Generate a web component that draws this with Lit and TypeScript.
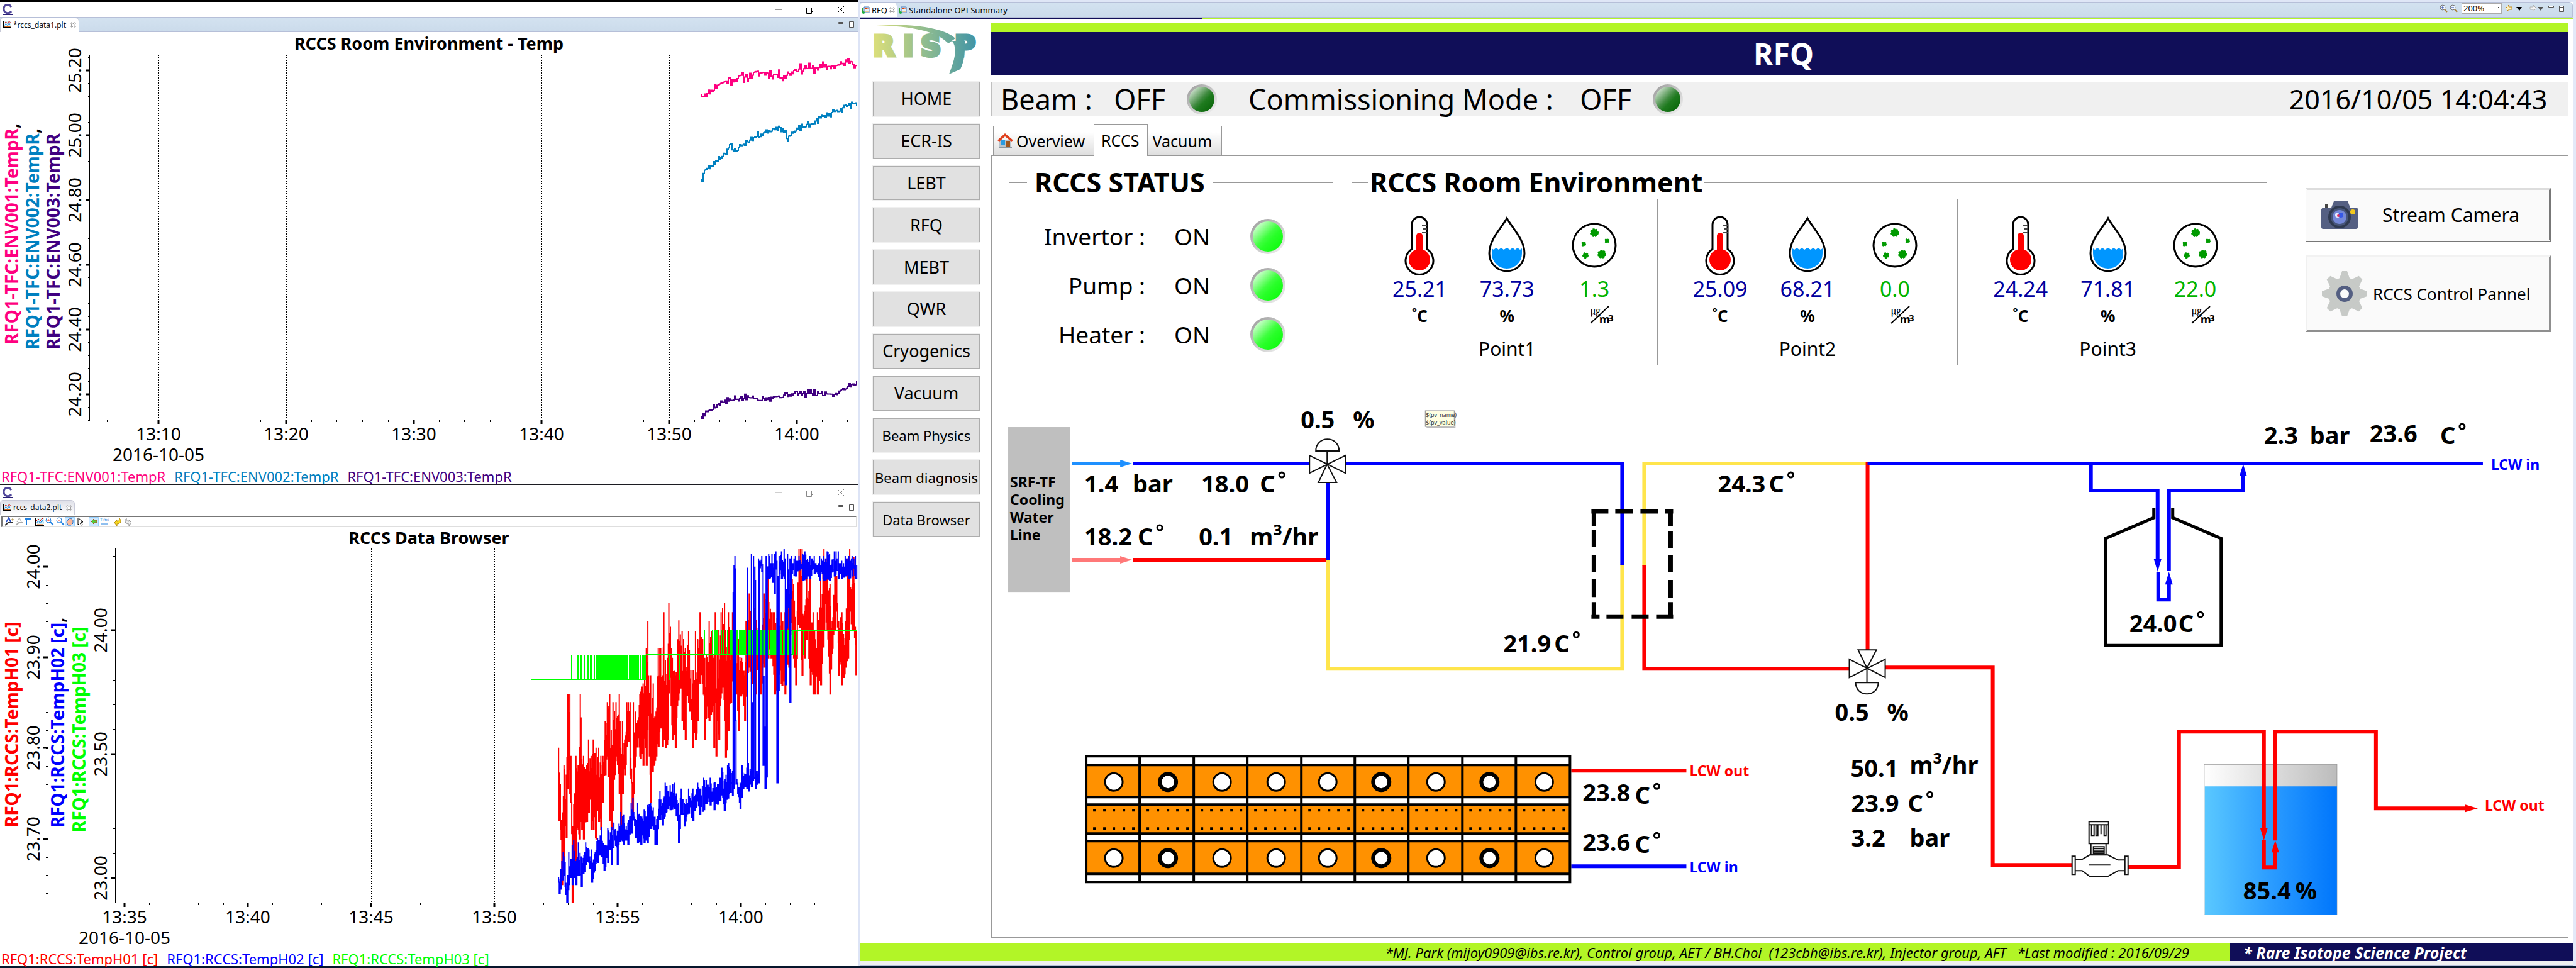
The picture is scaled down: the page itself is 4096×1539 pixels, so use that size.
import { LitElement, html, svg, css } from "lit";
import { customElement, property } from "lit/decorators.js";

type Pt = [number, number];

/** Small deterministic generator so that the traces look the same on every load. */
function rng(seed: number) {
  let s = seed;
  return () => {
    s = (s * 1664525 + 1013904223) % 4294967296;
    return s / 4294967296;
  };
}

/** Step trace that follows key points with quantised sensor noise. */
function noisyTrace(keys: Pt[], quantum: number, seed: number): string {
  const rand = rng(seed);
  let d = `M${keys[0][0]} ${keys[0][1]}`;
  let k = 0;
  for (let x = keys[0][0]; x <= keys[keys.length - 1][0]; x += 2) {
    while (k < keys.length - 2 && x > keys[k + 1][0]) k++;
    const [x0, y0] = keys[k];
    const [x1, y1] = keys[k + 1];
    const base = y0 + ((y1 - y0) * (x - x0)) / (x1 - x0);
    const r = rand();
    const kick = r > 0.95 ? -2 : r < 0.05 ? 2 : r > 0.72 ? -1 : r < 0.28 ? 1 : 0;
    const y = Math.round((base + kick * quantum) * 10) / 10;
    d += `H${x}V${y}`;
  }
  return d;
}

/** Dense trace that jumps between an upper and a lower envelope: x, top, bottom triples. */
function envelopeTrace(env: number[], quantum: number, step: number, seed: number): string {
  const rand = rng(seed);
  const px = (v: number) => Math.round((831.4 + v * 0.34443) * 10) / 10;
  const py = (v: number) => Math.round((859.9 + v * 0.37163) * 10) / 10;
  let d = `M${px(env[0])} ${py(env[1])}`;
  for (let i = 0; i < env.length; i += 3) {
    const [x, hi, lo] = env.slice(i, i + 3);
    d += `H${px(x)}V${py(hi)}V${py(lo)}`;
    if (i + 3 >= env.length) break;
    const nx = env[i + 3];
    for (let v = x + step; v < nx - step / 2; v += step) {
      const t = (v - x) / (nx - x);
      const top = hi + (env[i + 4] - hi) * t;
      const bot = lo + (env[i + 5] - lo) * t;
      const span = bot - top;
      const a = top + Math.round((rand() * 0.45 * span) / quantum) * quantum;
      const b = bot - Math.round((rand() * 0.45 * span) / quantum) * quantum;
      d += `H${px(v)}V${py(a)}V${py(b)}`;
    }
  }
  return d;
}

const ENV1: Pt[] = [[1116,150],[1124,149],[1137,137],[1153,129],[1182,123],[1213,115],[1236,119],[1248,121],[1265,110],[1296,108],[1331,104],[1350,97],[1362,101]];
const ENV2: Pt[] = [[1116,285],[1119,271],[1130,264],[1144,250],[1162,231],[1165,242],[1173,235],[1198,219],[1225,206],[1240,200],[1251,219],[1267,206],[1284,200],[1308,185],[1331,175],[1358,164],[1362,169]];
const ENV3: Pt[] = [[1116,662],[1130,649],[1144,641],[1170,635],[1189,632],[1208,634],[1236,630],[1260,626],[1308,626],[1326,627],[1343,616],[1362,608]];

const H01 = [165,885,1195,173,1040,1235,180,1270,1470,190,960,1350,200,1000,1270,208,655,960,217,655,1080,222,920,1120,228,1235,1545,238,1080,1350,245,920,1465,255,960,1235,263,880,1275,265,655,1200,280,920,1275,295,960,1200,303,850,1160,315,920,1235,325,850,1235,338,885,1275,350,885,1200,360,920,1235,370,920,1120,380,770,1000,390,690,920,401,655,1195,408,810,1235,416,690,1155,430,690,920,445,655,1080,452,885,1215,460,770,1080,470,850,1000,480,690,880,495,690,1000,505,1040,1160,510,690,1080,520,730,920,540,655,920,555,610,960,570,460,960,577,345,650,584,650,920,590,575,1120,602,610,960,615,730,920,625,460,880,636,460,800,645,575,880,651,305,850,660,570,885,668,500,850,674,265,650,690,500,850,704,575,885,720,340,650,735,385,770,750,460,850,765,385,690,783,610,885,797,385,850,807,420,770,818,305,610,830,420,610,840,500,850,860,345,770,870,385,730,882,500,885,888,305,690,892,460,920,905,380,850,915,305,650,931,265,770,936,380,925,949,305,810,960,385,690,968,305,570,985,460,655,995,420,810,1010,500,655,1024,575,770,1030,345,655,1045,225,540,1060,385,610,1073,265,655,1085,385,540,1098,385,655,1115,225,540,1132,150,500,1148,305,500,1163,305,655,1180,345,570,1193,305,610,1210,305,655,1228,185,540,1240,150,345,1250,185,500,1260,385,615,1275,35,300,1289,35,575,1300,300,500,1310,120,420,1327,150,615,1340,305,655,1360,305,655,1375,110,615,1390,35,385,1405,75,385,1418,185,655,1428,345,460,1440,150,385,1449,150,300,1458,345,575,1473,305,615,1490,345,540,1500,75,500,1509,35,300,1520,185,385,1528,70,385,1538,385,575];

const H02 = [165,1440,1460,168,1470,1510,180,1370,1450,186,1330,1430,195,1375,1480,203,1490,1545,212,1330,1470,222,1360,1440,228,1300,1470,235,1280,1440,245,1370,1470,256,1290,1430,270,1350,1480,290,1290,1385,305,1320,1375,318,1320,1460,330,1340,1410,345,1270,1375,363,1225,1350,375,1310,1410,392,1230,1375,410,1225,1385,420,1205,1280,436,1240,1385,452,1160,1280,465,1170,1300,485,1205,1300,500,1120,1250,508,1100,1170,520,1190,1270,530,1120,1290,545,1190,1300,560,1150,1290,575,1130,1290,590,1120,1230,602,1140,1230,610,1180,1300,618,1190,1300,633,1070,1190,645,1120,1215,657,1035,1160,680,1045,1150,700,1035,1145,719,1120,1290,731,1060,1170,745,1120,1220,765,1060,1165,785,1060,1195,807,1035,1110,817,1060,1170,835,1013,1150,865,1013,1130,883,1035,1150,910,1013,1110,919,970,1080,930,1025,1155,945,960,1100,950,950,1080,968,985,1090,971,220,1060,975,105,220,979,65,120,982,770,770,984,960,1040,992,1035,1080,1003,1035,1145,1012,960,1060,1034,970,1060,1037,115,1050,1041,950,1070,1052,985,1040,1055,55,1050,1061,690,1025,1065,65,1015,1071,110,170,1074,985,1060,1085,985,1035,1088,75,1035,1092,85,115,1103,65,130,1109,100,960,1118,795,1060,1123,65,1010,1128,110,160,1135,55,160,1150,55,150,1161,55,225,1168,45,120,1173,85,1035,1178,150,640,1183,65,140,1194,45,160,1206,35,160,1212,75,615,1222,55,160,1233,75,690,1240,65,140,1258,65,150,1275,65,125,1292,55,170,1302,45,160,1325,65,160,1345,65,140,1370,65,170,1389,65,170,1405,45,160,1416,55,170,1438,45,150,1456,45,160,1472,85,160,1488,65,150,1505,65,160,1520,65,150,1535,65,160,1541,105,160];

/** Intervals during which TempH03 toggles between two readings. */
const H03_LOW = [[223,229],[250,255],[262,273],[281,287],[299,305],[309,320],[326,332],[338,406],[409,428],[431,448],[450,485],[489,508],[510,516],[518,535],[541,547],[551,569],[675,680],[718,723]];
const H03_HIGH = [[836,840],[873,879],[885,891],[893,899],[914,920],[922,928],[941,946],[955,970],[972,996],[999,1007],[1010,1016],[1018,1030],[1033,1069],[1071,1137],[1141,1163],[1165,1180],[1182,1197],[1200,1228],[1244,1250],[1259,1265],[1294,1300]];

const h03Path = () => {
  const px = (v: number) => Math.round(831.4 + v * 0.34443);
  const bars = (list: number[][], y: number, h: number) =>
    list.map(([a, b]) => `M${px(a)} ${y}H${Math.max(px(b), px(a) + 2)}v${h}H${px(a)}z`).join("");
  return bars(H03_LOW, 1041, 40) + bars(H03_HIGH, 1001, 40);
};

const range = (n: number) => Array.from({ length: n }, (_, i) => i);

const windowIcons = html`<span class="wbtns">
  <svg viewBox="0 0 112 14" width="112" height="14" fill="none" stroke="currentColor">
    <path d="M1 7.5h11" opacity=".4" />
    <path d="M50.500 4.500h8v9h-8zM52.500 4V1.500h8v9h-2" />
    <path d="M100 2l10 10M110 2l-10 10" />
  </svg>
</span>`;

const paneIcons = html`<svg class="pane" viewBox="0 0 26 12" width="26" height="12" fill="#fff" stroke="#555">
  <path d="M.5 2.500h7v2h-7zM17.500 1.500h7v9h-7zM17.500 3.500h7" />
</svg>`;

const plotIcon = svg`<path d="M1 0v13M0 12h14" stroke="#000" stroke-width="2" fill="none"/><path d="M3 1h11v9H3z" fill="#d6f6fa"/><path d="M2 5l3-3 3 3 3-4 3 3" stroke="#e00000" fill="none"/><path d="M2 9l3-4 3 4 3-5 2 4" stroke="#1c7ce0" fill="none"/><path d="M3 11h10" stroke="#f06000"/>`;
const opiIcon = svg`<path d="M3 1h8v9H3z" fill="#e8f1fb" stroke="#4a7ab8"/><path d="M4 5l2-2 2 2 2-3" stroke="#e04000" fill="none"/><path d="M4 8h6" stroke="#f0a030"/><path d="M0 2v8" stroke="#30a030" stroke-width="2"/><circle cx="2" cy="10" r="2" fill="#20b040"/>`;
const closeX = html`<svg width="9" height="9" viewBox="0 0 9 9"><path d="M1 1h2l1.500 2L6 1h2v2L6 4.500 8 6v2H6L4.500 6 3 8H1V6l2-1.500L1 3z" fill="#fff" stroke="#777" stroke-width=".8" /></svg>`;

@customElement("plot-window")
export class PlotWindow extends LitElement {
  @property() file = "";
  @property() heading = "";
  @property({ type: Boolean }) active = false;
  @property({ attribute: false }) legend: { name: string; color: string }[] = [];

  static styles = css`
    :host { display: flex; flex-direction: column; background: #fff; font-family: "Noto Sans", sans-serif; color: #000; min-width: 0; }
    .titlebar { display: flex; align-items: center; justify-content: space-between; height: 24px; padding: 0 20px 0 3px; color: #888; }
    :host([active]) .titlebar { color: #000; }
    .wbtns { display: flex; }
    .tabs { display: flex; justify-content: space-between; align-items: center; height: 23px; border-bottom: 1px solid transparent; padding-right: 5px; }
    :host([active]) .tabs { background: linear-gradient(#d3e2f0, #cbdbeb); border-bottom-color: #b6bfd8; border-top: 1px solid #b6bfd8; height: 22px; }
    .tab { display: flex; align-items: center; gap: 3px; height: 23px; padding: 0 4px; box-sizing: border-box; border: 1px solid #c8cad8; border-bottom: 0; border-radius: 5px 6px 0 0; background: linear-gradient(#dfe0e8, #fff); font: 12px/20px "Noto Sans", sans-serif; color: #111; }
    :host([active]) .tab { background: #fff; }
    .tab span { padding-right: 4px; }
    .title { margin: 0; text-align: center; font-size: 27px; line-height: 34px; font-weight: 700; }
    :host([active]) .title { line-height: 35px; }
    .legend { display: flex; gap: 14px; padding-left: 2px; font-size: 22px; line-height: 23px; white-space: nowrap; }
    .grow { flex: 1; }
  `;

  render() {
    return html`
      <div class="titlebar">
        <svg width="19" height="19" viewBox="0 0 19 19" fill="none"><path d="M15 5C11-1 3 1 3 8s8 9 12 4" stroke="#51479a" stroke-width="3" /><path d="M1 17h16" stroke="#2c2278" stroke-width="2" /></svg>
        ${windowIcons}
      </div>
      <div class="tabs">
        <div class="tab"><svg width="13" height="13" viewBox="0 0 15 15">${plotIcon}</svg><span>${this.file}</span>${closeX}</div>
        ${paneIcons}
      </div>
      <slot name="tools"></slot>
      <h2 class="title">${this.heading}</h2>
      <slot></slot>
      <div class="grow"></div>
      <div class="legend">${this.legend.map((l) => html`<span style="color:${l.color}">${l.name}</span>`)}</div>
    `;
  }
}

@customElement("status-led")
export class StatusLed extends LitElement {
  @property({ type: Boolean }) on = false;
  static styles = css`
    :host { display: block; width: 48px; height: 48px; border-radius: 50%; background: linear-gradient(135deg, #989898, #f6f6f6); padding: 4px; box-sizing: border-box; }
    :host([on]) { width: 56px; height: 56px; }
    .lens { width: 100%; height: 100%; border-radius: 50%; background: linear-gradient(135deg, #eaf2ea 4%, #3f8a3f 48%, #1e7a1e 60%, #046004); }
    :host([on]) .lens { background: linear-gradient(135deg, #f4fff4 4%, #3fff3f 48%, #28ff28 60%, #05fb05); }
  `;
  render() {
    return html`<div class="lens"></div>`;
  }
}

@customElement("app-root")
export class AppRoot extends LitElement {
  static styles = css`
    :host { display: block; font-family: "Noto Sans", sans-serif; color: #000; background: #fff; }
    .desktop { display: grid; grid-template-columns: minmax(0, 1367fr) minmax(0, 2729fr); min-height: 100vh; box-sizing: border-box; border-bottom: 3px solid #06162c; }
    .left { display: flex; flex-direction: column; border-right: 3px solid #dde4f6; }
    .left plot-window { flex: none; border-top: 3px solid #000; }
    .left plot-window + plot-window { flex: 1 0 auto; border-top: 2px solid #1c1c22; }
    svg { display: block; }
    .plot { width: 100%; overflow: visible; }
    .plot text { font-family: "Noto Sans", sans-serif; font-size: 28px; text-anchor: middle; }
    .plot .ytitle { font-weight: 700; }
    .axis { stroke: #000; fill: none; }
    .major { stroke: #000; stroke-width: 3; fill: none; }
    .grid { stroke: #000; stroke-dasharray: 2 2; fill: none; }
    .tools { display: flex; align-items: center; gap: 4px; margin: 1px 2px 0; height: 18px; box-sizing: border-box; border: 1px solid #dedede; border-top: 2px solid #777; border-left: 2px solid #777; padding-left: 2px; }

    .right { display: flex; flex-direction: column; background: #fff; border-right: 5px solid #e3e9f8; border-top: 3px solid #dfe6f6; }
    .views { display: flex; justify-content: space-between; height: 25px; box-sizing: border-box; background: linear-gradient(#d3e2f0, #cbdbeb); border: 1px solid #b6bfd8; border-radius: 0 6px 0 0; }
    .viewtabs { display: flex; align-items: center; font-size: 13px; line-height: 20px; }
    .vt { display: flex; align-items: center; gap: 3px; padding: 0 3px; height: 23px; }
    .vt.on { background: #fff; border-right: 1px solid #b6bfd8; border-radius: 5px 6px 0 0; gap: 3px; }
    .viewtools { display: flex; align-items: flex-start; gap: 5px; padding: 1px 9px 0 0; }
    .zoomsel { position: relative; display: block; }
    .zoomsel select { appearance: none; display: block; width: 64px; height: 17px; border: 1px solid #aaa; border-radius: 0; background: #fff; margin: 0; padding: 0 0 0 2px; font: 13px/15px "Noto Sans", sans-serif; color: #000; }
    .zoomsel svg { position: absolute; right: 4px; top: 5px; pointer-events: none; }
    .strip { display: grid; grid-template-columns: 1fr 4fr; height: 3px; }
    .strip i:first-child { background: #100e58; }
    .strip i:last-child { background: #b2f527; }
    .body { display: grid; grid-template-columns: 170px minmax(0, 1fr); column-gap: 18px; padding: 6px 7px 9px 21px; flex: 1; }
    .side { display: flex; flex-direction: column; }
    .side nav { display: grid; grid-auto-rows: 1fr; gap: 12px; height: 723px; margin-top: 11px; }
    .side button { font: 27px/36px "Noto Sans", sans-serif; padding: 0; white-space: nowrap; color: #000; background: #e1e1e1; border: 1px solid #adadad; box-shadow: 0 0 0 1px #f0f0f0; }
    .side button.small { font-size: 22px; }
    .main { display: flex; flex-direction: column; min-width: 0; }
    .band { background: #100e58; border-top: 14px solid #b2f527; color: #fff; text-align: center; margin: 0; padding-left: 12px; font-size: 48px; line-height: 69px; font-weight: 700; }
    .status { display: grid; grid-template-columns: 383px 741px 1fr 471px; margin-top: 10px; height: 55px; box-sizing: border-box; border: 1px solid #c0c0c0; background: #f0f0f0; font-size: 45px; line-height: 53px; white-space: nowrap; }
    .status > div { display: flex; align-items: center; border-left: 1px solid #c0c0c0; box-sizing: border-box; }
    .status > div:first-child { border-left: 0; padding-left: 14px; }
    .status > div:nth-child(2) { padding-left: 24px; }
    .status > div:last-child { justify-content: center; font-size: 43px; padding-right: 6px; }
    .status .val { margin: 0 34px 0 auto; }
    .status status-led { margin-right: 25px; }
    .pagetabs { display: flex; align-items: flex-end; margin: 12px 0 0 3px; height: 50px; }
    .pagetabs button { display: flex; align-items: center; gap: 5px; height: 47px; margin: 0; border: 1px solid #999; border-bottom: 0; background: linear-gradient(#fff 20%, #dedede); font: 25px/36px "Noto Sans", sans-serif; color: #000; padding: 0 14px 0 6px; }
    .pagetabs button.on { height: 51px; background: #fff; padding: 0 13px 0 11px; position: relative; margin-bottom: -1px; border-left: 0; }
    .pagetabs button:last-child { border-left: 0; padding: 0 15px 0 7px; }
    .panel { border: 1px solid #999; flex: 1; display: flex; flex-direction: column; }
    .top { display: grid; grid-template-columns: 516fr 29px 1456fr 61px 390fr; padding: 17px 27px 0; }
    fieldset { margin: 0; padding: 0; min-width: 0; border: 1px solid #999; height: 341px; box-sizing: border-box; }
    .st legend { margin-left: 28px; padding: 0 12px; }
    .env legend { margin-left: 26px; padding: 0 2px; }
    legend { font-size: 43px; line-height: 50px; font-weight: 700; white-space: nowrap; }
    .env { grid-column: 3; }
    .ctl { grid-column: 5; }
    .rows { padding-top: 22px; }
    .row { display: grid; grid-template-columns: 216px 75px 56px; column-gap: 46px; align-items: center; height: 78px; font-size: 37px; line-height: 48px; white-space: nowrap; }
    .row span:first-child { text-align: right; }
    .points { display: grid; grid-template-columns: repeat(3, 1fr); padding: 2px 14px 0 7px; }
    .point { border-left: 1px solid #999; padding: 27px 30px 0 30px; height: 263px; box-sizing: border-box; text-align: center; }
    .point:first-child { border-left-color: transparent; }
    .cells { display: grid; grid-template-columns: repeat(3, 1fr); }
    .cell { display: flex; flex-direction: column; align-items: center; color: #0000a0; font-size: 34px; line-height: 44px; }
    .cell.dust { color: #00b400; }
    .pic { height: 93px; }
    .unit { height: 54px; font-size: 26px; line-height: 42px; font-weight: 700; color: #000; }
    .name { font-size: 30px; line-height: 40px; }
    .ctl { display: flex; flex-direction: column; gap: 22px; padding-top: 34px; }
    .ctl button { display: grid; align-items: center; font: 30px/40px "Noto Sans", sans-serif; color: #000; white-space: nowrap; text-align: left; background: #fafafa; padding: 0; border: 3px solid; border-color: #f2f2f2 #8f8f8f #8f8f8f #f0f0f0; }
    .ctl .cam { height: 85px; grid-template-columns: 97px 1fr; padding-left: 22px; border-style: double; border-color: #ddd #777 #777 #ddd; }
    .ctl .gear { height: 122px; grid-template-columns: 81px 1fr; padding-left: 23px; font-size: 26px; }
    .flow { width: 100%; overflow: visible; }
    .flow text { font-family: "Noto Sans", sans-serif; font-weight: 700; font-size: 38px; white-space: pre; }
    .flow .s { font-size: 23px; }
    .flow .tip { font-size: 9px; font-weight: 400; fill: #333; }
    .b { stroke: #00f; stroke-width: 6; fill: none; }
    .r { stroke: #f00; stroke-width: 6; fill: none; }
    .y { stroke: #ffe54c; stroke-width: 6; fill: none; }
    .k { stroke: #111; stroke-width: 2; fill: #fff; }
    footer { display: grid; grid-template-columns: 1fr 545px; height: 28px; font-size: 22px; line-height: 28px; font-style: italic; white-space: pre; background: #b2f527; }
    footer div:first-child { text-align: right; padding-right: 65px; }
    footer div:last-child { background: #100e58; color: #fff; font-weight: 700; padding-left: 21px; font-size: 25px; }
    .pad { height: 8px; box-sizing: border-box; background: #f0f0f0; border-bottom: 2px solid #b6bfd8; }
  `;

  private plotTemp() {
    const xs = range(6).map((i) => 252 + i * 203);
    const ys = range(6).map((i) => 112 + i * 103);
    return html`<svg class="plot" viewBox="0 86 1364 660">
      <path class="grid" d=${xs.map((x) => `M${x}.5 87V667`).join("")} />
      <path class="axis" d="M142.500 87V667.500H1362" />
      <path class="axis" d=${range(30).map((i) => `M${170 + Math.round(i * 40.6)}.5 668v3`).join("") + range(29).map((i) => `M140 ${91 + Math.round(i * 20.6)}.5h3`).join("")} />
      <path class="major" d=${xs.map((x) => `M${x} 667v7`).join("") + ys.map((y) => `M136 ${y}h7`).join("")} />
      ${xs.map((x, i) => svg`<text x=${x} y="700">${["13:10", "13:20", "13:30", "13:40", "13:50", "14:00"][i]}</text>`)}
      ${ys.map((y, i) => svg`<text transform="translate(129 ${y}) rotate(-90)">${["25.20", "25.00", "24.80", "24.60", "24.40", "24.20"][i]}</text>`)}
      <text x="252" y="733">2016-10-05</text>
      <text class="ytitle" transform="translate(29 372) rotate(-90)" fill="#ff0080">RFQ1-TFC:ENV001:TempR<tspan fill="#000">,</tspan></text>
      <text class="ytitle" transform="translate(62 380) rotate(-90)" fill="#0080c0">RFQ1-TFC:ENV002:TempR<tspan fill="#000">,</tspan></text>
      <text class="ytitle" transform="translate(95 384) rotate(-90)" fill="#400080">RFQ1-TFC:ENV003:TempR</text>
      <g fill="none" stroke-width="2">
        <path stroke="#ff0080" d=${noisyTrace(ENV1, 4, 11)} />
        <path stroke="#0080c0" d=${noisyTrace(ENV2, 3, 23)} />
        <path stroke="#400080" d=${noisyTrace(ENV3, 3, 5)} />
      </g>
    </svg>`;
  }

  private plotData() {
    const xs = range(6).map((i) => 198 + i * 196);
    const ya = [901, 1045, 1189, 1334];
    const yb = [1002, 1199, 1396];
    return html`<svg class="plot" viewBox="0 872 1364 641">
      <path class="grid" d=${xs.map((x) => `M${x}.5 872V1435`).join("")} />
      <path class="axis" d="M76.500 872V1435M183.500 872V1435.500H1362" />
      <path class="axis" d=${range(28).map((i) => `M${237 + Math.round(i * 39.2)}.5 1436v3`).join("") + range(18).map((i) => `M73 ${930 + Math.round(i * 28.84)}.5h3`).join("") + range(15).map((i) => `M180 ${884 + Math.round(i * 39.35)}.5h3`).join("")} />
      <path class="major" d=${xs.map((x) => `M${x} 1435v7`).join("") + ya.map((y) => `M69 ${y}h7`).join("") + yb.map((y) => `M176 ${y}h7`).join("")} />
      ${xs.map((x, i) => svg`<text x=${x} y="1468">${["13:35", "13:40", "13:45", "13:50", "13:55", "14:00"][i]}</text>`)}
      ${ya.map((y, i) => svg`<text transform="translate(63 ${y}) rotate(-90)">${["24.00", "23.90", "23.80", "23.70"][i]}</text>`)}
      ${yb.map((y, i) => svg`<text transform="translate(170 ${y}) rotate(-90)">${["24.00", "23.50", "23.00"][i]}</text>`)}
      <text x="198" y="1501">2016-10-05</text>
      <text class="ytitle" transform="translate(29 1152) rotate(-90)" fill="#f00">RFQ1:RCCS:TempH01 [c]</text>
      <text class="ytitle" transform="translate(102 1149) rotate(-90)" fill="#00f">RFQ1:RCCS:TempH02 [c]<tspan fill="#000">,</tspan></text>
      <text class="ytitle" transform="translate(136 1160) rotate(-90)" fill="#0f0">RFQ1:RCCS:TempH03 [c]</text>
      <path fill="none" stroke="#f00" stroke-width="2" d=${envelopeTrace(H01, 38.5, 3.5, 7)} />
      <path fill="#0f0" d=${h03Path()} />
      <path fill="none" stroke="#0f0" stroke-width="2" d="M844 1080H1027M1027 1041H1262M1244 1002H1362" />
      <path fill="none" stroke="#00f" stroke-width="2" d=${envelopeTrace(H02, 10, 4, 31)} />
    </svg>`;
  }

  private plotTools() {
    return html`<div class="tools" slot="tools">
      <svg width="300" height="15" viewBox="0 0 300 15" fill="none">
        <path d="M2 13l5-4h8" stroke="#333" stroke-width="2" /><path d="M4 8l4-7 3 7" stroke="#2850c8" stroke-width="2" /><path d="M14 1v6M11 4h6" stroke="#a88430" />
        <path d="M19 13l5-4h7" stroke="#aaa" stroke-width="2" /><path d="M21 8l4-7 3 7" stroke="#aaa" />
        <path d="M36 1v12M34 3h10" stroke="#2080e0" stroke-width="2" />
        <g transform="translate(50 1)">${plotIcon}</g>
        <g stroke="#2080e0"><circle cx="71" cy="5" r="4" /><path d="M74 8l5 5M91 8l5 5" stroke-width="2" /><circle cx="88" cy="5" r="4" /></g>
        <path d="M69 5h4M71 3v4M86 5h4" stroke="#f04020" />
        <path d="M97.500.500h15v14h-15z" fill="#cce8ff" stroke="#99d1ff" /><path d="M102 13l-2-5 2-4 2-2 2 0 2 1 2 2v5l-3 3z" fill="#fbb89a" stroke="#1c70d0" />
        <path d="M118 1v11l3-3 2 4 2-1-2-4h3z" stroke="#000" />
        <path d="M135.500.500h15v14h-15z" fill="#cce8ff" stroke="#99d1ff" /><path d="M139 7l4-4v2h5v4h-5v2z" fill="#50d040" stroke="#b05818" />
        <path d="M154 11h12M156 9l-2 2 2 2M164 9l2 2-2 2" stroke="#2080e0" />
        <text x="153" y="6" font-size="6" font-family="DejaVu Sans" fill="#2080e0">Time</text>
        <path d="M176 9l4-4v2c3 0 4-2 4-5 4 4 2 9-4 9v3z" fill="#f8d820" stroke="#b89010" />
        <path d="M203 9l-4-4v2c-3 0-4-2-4-5-4 4-2 9 4 9v3z" fill="#eee" stroke="#999" />
      </svg>
    </div>`;
  }

  private thermo() {
    return html`<svg class="pic" width="50" height="93" viewBox="0 0 50 93">
      <path d="M13 52V13a12 12 0 0 1 24 0v39a22 22 0 1 1-24 0z" fill="#fff" stroke="#000" stroke-width="3" />
      <path d="M29 15h8M31 20h6M29 26h8" stroke="#444" stroke-width="2" />
      <circle cx="25" cy="69" r="17" fill="#f00" /><path d="M25 31v36" stroke="#f00" stroke-width="10" stroke-linecap="round" />
    </svg>`;
  }

  private drop() {
    return html`<svg class="pic" width="62" height="93" viewBox="0 0 62 93">
      <path d="M31 3C23 18 3 36 3 59a28 28 0 0 0 56 0C59 36 39 18 31 3z" fill="#fff" stroke="#000" stroke-width="3" />
      <path d="M7 51l3 2 4-3 4 3 4-3 4 3 5-3 5 3 4-3 4 3 4-3 4 3 3-2v8a24 24 0 0 1-48 0z" fill="#0096ff" />
    </svg>`;
  }

  private dust() {
    return html`<svg class="pic" width="74" height="93" viewBox="0 0 74 93">
      <circle cx="37" cy="46" r="34" fill="#fff" stroke="#000" stroke-width="3" />
      <g fill="#009a00" stroke="#009a00" stroke-width="2" stroke-dasharray="3 2"><circle cx="37" cy="26" r="6" /><circle cx="57" cy="39" r="3" /><circle cx="20" cy="44" r="3" /><circle cx="23" cy="62" r="4" /><circle cx="49" cy="60" r="6" /></g>
    </svg>`;
  }

  private point(name: string, t: string, h: string, d: string) {
    return html`<div class="point">
      <div class="cells">
        <div class="cell">${this.thermo()}<span>${t}</span><span class="unit">˚C</span></div>
        <div class="cell">${this.drop()}<span>${h}</span><span class="unit">%</span></div>
        <div class="cell dust">${this.dust()}<span>${d}</span><span class="unit"><svg width="10" height="40" viewBox="15 0 10 40" overflow="visible">
          <text x="14" y="19" font-size="16" font-weight="400" font-family="Noto Sans CJK KR">㎍</text>
          <path d="M14 33L43 6" stroke="#000" stroke-width="2" />
          <text x="28" y="33" font-size="17">m</text><text x="42" y="30" font-size="15">3</text>
        </svg></span></div>
      </div>
      <div class="name">${name}</div>
    </div>`;
  }

  private cavity() {
    const xs = range(10).map((i) => 1728 + Math.round(i * 85.4));
    const cx = [1772, 1858, 1944, 2030, 2112, 2197, 2284, 2369, 2456];
    return svg`<g>
      <rect x="1728" y="1216" width="769" height="51" fill="#ff9100"/><rect x="1728" y="1279" width="769" height="46" fill="#ff9100"/><rect x="1728" y="1337" width="769" height="52" fill="#ff9100"/>
      <path stroke="#000" stroke-width="4" fill="none" d=${xs.map((x) => `M${x} 1200V1404`).join("") + [1202, 1216, 1267, 1279, 1325, 1337, 1389, 1402].map((y) => `M1726 ${y}H2499`).join("")}/>
      ${cx.map((x, i) => [1243, 1364].map((y) => [1, 5, 7].includes(i)
        ? svg`<circle cx=${x} cy=${y} r="13" fill="#fff" stroke="#000" stroke-width="6"/>`
        : svg`<circle cx=${x} cy=${y} r="14" fill="#fff" stroke="#000" stroke-width="3"/>`))}
      <path stroke="#000" stroke-width="4" d=${range(9).map((c) => range(5).map((i) => { const x = 1739 + Math.round(c * 85.4 + i * 15.6); return `M${x} 1288h4M${x} 1317h4`; }).join("")).join("")}/>
    </g>`;
  }

  private label(x: number, y: number, t: string) {
    return svg`<text x=${x - 2} y=${y}>${t}</text>`;
  }

  private degree(x: number, y: number) {
    return svg`<text x=${x - 2} y=${y}>C</text><circle cx=${x + 33} cy=${y - 28} r="4" fill="none" stroke="#000" stroke-width="3"/>`;
  }

  private flow() {
    const L = this.label;
    const D = this.degree;
    return html`<svg class="flow" viewBox="1578 606 2505 884">
      <defs>
        <linearGradient id="steel"><stop offset="0" stop-color="#fff" /><stop offset="1" stop-color="#bcbcbc" /></linearGradient>
        <linearGradient id="water"><stop offset="0" stop-color="#5ac8ff" /><stop offset=".5" stop-color="#2b9cff" /><stop offset="1" stop-color="#0076fc" /></linearGradient>
      </defs>
      <rect x="1604" y="679" width="98" height="263" fill="#bfbfbf" />
      <text class="s" x="1607" y="775">SRF-TF</text><text class="s" x="1607" y="803">Cooling</text><text class="s" x="1607" y="831">Water</text><text class="s" x="1607" y="859">Line</text>
      <path d="M1705 734h77v-3l19 6-19 6v-3h-77z" fill="#1e90ff" />
      <path d="M1705 887h77v-3l19 6-19 6v-3h-77z" fill="#ff7878" />
      <path class="y" d="M2112 890V1063H2580V897M2615 900V737H2970" />
      <path class="r" d="M1802 890H2109M2615 898V1063H2941M2970 735V1033M2997 1061H3169V1375H3295M3384 1378H3465V1163H3600V1318M3600 1335V1379H3618V1354M3618 1336V1163H3778V1285H3921M2499 1225H2682" />
      <path class="b" d="M1802 737H2083M2112 767V890M2139 737H2580V898M2970 737H3948M3325 737V780H3431V890M3432 909V953H3449V928M3449 908V780H3567V757M2499 1377H2682" />
      <path fill="#00f" d="M3425 889h12l-6 20zM3443 929h12l-6-20zM3561 757h12l-6-19z" />
      <path d="M3425 807V823L3348 856V1026H3532V856L3455 823V807" fill="none" stroke="#000" stroke-width="5" />
      <rect x="2267" y="653" width="46" height="25" fill="#ffffe1" stroke="#888" /><path d="M2269 679.500H2314.500V655" stroke="#bbb" fill="none" />
      <text class="tip" x="2268" y="663">$(pv_name)</text><text class="tip" x="2268" y="675">$(pv_value)</text>
      <g class="k">
        <path d="M2083 724V752L2140 724V752ZM2111 738L2097 767H2126ZM2111 738V717M2093 717C2093 692 2130 692 2130 717Z" />
        <path d="M2941 1048V1077L2998 1048V1077ZM2969 1062L2955 1033H2984ZM2969 1062V1085M2951 1085C2951 1109 2987 1109 2987 1085Z" />
      </g>
      <path stroke="#000" stroke-width="7" fill="none" d="M2531 813H2558M2569 813H2597M2609 813H2637M2648 813H2661M2531 980H2544M2555 980H2582M2595 980H2622M2634 980H2661M2535 810V837M2535 843V870M2535 883V910M2535 921V949M2535 957V983M2657 810V837M2657 845V872M2657 883V910M2657 922V950M2657 957V983" />
      <rect x="3505" y="1215" width="211" height="239" fill="url(#steel)" stroke="#999" />
      <rect x="3506" y="1250" width="210" height="204" fill="url(#water)" />
      <path class="r" d="M3600 1214V1318M3600 1335V1379H3618V1354M3618 1336V1214" />
      <path fill="#f00" d="M3594 1316h12l-6 20zM3612 1355h12l-6-19zM3920 1279v12l20-6z" />
      <g class="k">
        <path d="M3322 1306h31v35h-31zM3322 1311h31M3325 1341h24v18h-24zM3329 1346h17v10h-17zM3329 1349h17M3329 1353h17M3326 1312v16h4v-16M3333 1312v16h3v-16M3341 1312v14M3346 1312v16h3v-16" />
        <path d="M3300 1366H3311L3323 1359H3352L3368 1367H3379V1384H3368L3352 1393H3323L3311 1384H3300ZM3295 1361h5v29h-5zM3379 1361h5v29h-5zM3322 1375h34" />
      </g>
      ${this.cavity()}
      ${L(2071, 681, "0.5")}${L(2154, 681, "%")}
      ${L(1727, 783, "1.4")}${L(1804, 783, "bar")}${L(1913, 783, "18.0")}${D(2006, 783)}
      ${L(1727, 867, "18.2")}${D(1812, 867)}${L(1909, 867, "0.1")}${L(1990, 867, "m³/hr")}
      ${L(2734, 783, "24.3")}${D(2815, 783)}
      ${L(2393, 1037, "21.9")}${D(2474, 1037)}
      ${L(2920, 1146, "0.5")}${L(3003, 1146, "%")}
      ${L(2945, 1235, "50.1")}${L(3039, 1230, "m³/hr")}
      ${L(2946, 1291, "23.9")}${D(3036, 1291)}
      ${L(2946, 1346, "3.2")}${L(3039, 1346, "bar")}
      ${L(3602, 706, "2.3")}${L(3675, 706, "bar")}${L(3770, 703, "23.6")}${D(3882, 706)}
      ${L(3388, 1005, "24.0")}${D(3466, 1005)}
      ${L(3569, 1430, "85.4")}${L(3652, 1430, "%")}
      ${L(2519, 1274, "23.8")}${D(2602, 1278)}
      ${L(2519, 1353, "23.6")}${D(2602, 1356)}
      <g fill="#f00"><text class="s" x="2687" y="1234">LCW out</text><text class="s" x="3951" y="1289">LCW out</text></g>
      <g fill="#00f"><text class="s" x="2687" y="1387">LCW in</text><text class="s" x="3961" y="747">LCW in</text></g>
    </svg>`;
  }

  private logo() {
    return html`<svg width="172" height="82" viewBox="0 0 172 82" role="img" aria-label="RISP">
      <defs><linearGradient id="lg" gradientUnits="userSpaceOnUse" x1="0" y1="0" x2="172" y2="0"><stop offset="0" stop-color="#dcdf7a" /><stop offset=".5" stop-color="#8dbb90" /><stop offset="1" stop-color="#3990a8" /></linearGradient></defs>
      <path d="M5 3C50 0 112 5 131 24L120 32C100 12 62 5 5 3zM126 28C136 42 128 62 121 81L139 73C147 58 146 40 146 28z" fill="url(#lg)" />
      <g font-family="DejaVu Sans" font-weight="700" font-size="45" fill="url(#lg)" stroke="url(#lg)" stroke-width="5"><text x="0" y="52">R</text><text x="48" y="52">I</text><text x="76" y="52">S</text><text x="130" y="52">P</text></g>
    </svg>`;
  }

  render() {
    const nav = ["HOME", "ECR-IS", "LEBT", "RFQ", "MEBT", "QWR", "Cryogenics", "Vacuum", "Beam Physics", "Beam diagnosis", "Data Browser"];
    return html`<div class="desktop">
      <section class="left">
        <plot-window active file="*rccs_data1.plt" heading="RCCS Room Environment - Temp"
          .legend=${[{ name: "RFQ1-TFC:ENV001:TempR", color: "#ff0080" }, { name: "RFQ1-TFC:ENV002:TempR", color: "#0080c0" }, { name: "RFQ1-TFC:ENV003:TempR", color: "#400080" }]}>
          ${this.plotTemp()}
        </plot-window>
        <plot-window file="rccs_data2.plt" heading="RCCS Data Browser"
          .legend=${[{ name: "RFQ1:RCCS:TempH01 [c]", color: "#ff0000" }, { name: "RFQ1:RCCS:TempH02 [c]", color: "#0000ff" }, { name: "RFQ1:RCCS:TempH03 [c]", color: "#00ff00" }]}>
          ${this.plotTools()}${this.plotData()}
        </plot-window>
      </section>
      <section class="right">
        <div class="views">
          <div class="viewtabs">
            <div class="vt on"><svg width="12" height="12" viewBox="0 0 12 12">${opiIcon}</svg>RFQ ${closeX}</div>
            <div class="vt"><svg width="12" height="12" viewBox="0 0 12 12">${opiIcon}</svg>Standalone OPI Summary</div>
          </div>
          <div class="viewtools">
            <svg width="30" height="17" viewBox="0 0 30 17" fill="none"><g stroke="#777"><circle cx="5" cy="7" r="4" fill="#eef4ff" /><circle cx="21" cy="7" r="4" fill="#eef4ff" /></g><path d="M8 10l4 4M24 10l4 4" stroke="#a88038" stroke-width="2" /><path d="M3 7h4M5 5v4M19 7h4" stroke="#2040a0" /></svg>
            <label class="zoomsel"><select aria-label="Zoom"><option>200%</option></select><svg width="10" height="7" viewBox="0 0 10 7" fill="none"><path d="M1 1l4 4 4-4" stroke="#444" /></svg></label>
            <svg width="98" height="17" viewBox="0 0 98 17">
              <path d="M1 8l5-5v3h5v4H6v3z" fill="#fff3c0" stroke="#c08a20" /><path d="M18 6h9l-4 6z" />
              <path d="M50 8l-5-5v3h-5v4h5v3z" fill="#f4f4f4" stroke="#b0b0b0" /><path d="M52 6h9l-4 6z" fill="#555" />
              <path d="M69.500 4.500h8v2h-8zM86.500 4.500h7v9h-7zM86.500 6.500h7" fill="#fff" stroke="#555" />
            </svg>
          </div>
        </div>
        <div class="strip"><i></i><i></i></div>
        <div class="body">
          <div class="side">
            ${this.logo()}
            <nav>${nav.map((n, i) => html`<button class=${i > 7 ? "small" : ""}>${n}</button>`)}</nav>
          </div>
          <div class="main">
            <h1 class="band">RFQ</h1>
            <div class="status">
              <div><span>Beam :</span><span class="val">OFF</span><status-led></status-led></div>
              <div><span>Commissioning Mode :</span><span class="val">OFF</span><status-led></status-led></div>
              <div></div>
              <div>2016/10/05 14:04:43</div>
            </div>
            <div class="pagetabs" role="tablist">
              <button role="tab"><svg width="25" height="24" viewBox="0 0 25 24"><path d="M3 11h19v12H3z" fill="#b9c4cc" /><path d="M0 11L12 0l13 11-3 2-10-8L3 13z" fill="#e0401c" /><path d="M6 11h6v7H6z" fill="#2a9be0" /><path d="M14 12h6v11h-6z" fill="#a0561c" /><path d="M2 21h21v3H2z" fill="#8a979f" /></svg>Overview</button>
              <button role="tab" class="on">RCCS</button>
              <button role="tab">Vacuum</button>
            </div>
            <div class="panel">
              <div class="top">
                <fieldset class="st"><legend>RCCS STATUS</legend>
                  <div class="rows">${["Invertor :", "Pump :", "Heater :"].map((t) => html`<div class="row"><span>${t}</span><span>ON</span><status-led on></status-led></div>`)}</div>
                </fieldset>
                <fieldset class="env"><legend>RCCS Room Environment</legend>
                  <div class="points">
                    ${this.point("Point1", "25.21", "73.73", "1.3")}${this.point("Point2", "25.09", "68.21", "0.0")}${this.point("Point3", "24.24", "71.81", "22.0")}
                  </div>
                </fieldset>
                <div class="ctl">
                  <button class="cam"><svg width="58" height="48" viewBox="0 0 58 48"><path d="M6 6h5v8H6z" fill="#444" /><path d="M2 12h14l4-10h22l4 10h9a3 3 0 0 1 3 3v28a3 3 0 0 1-3 3H3a3 3 0 0 1-3-3V15z" fill="#545f82" /><circle cx="29" cy="27" r="18" fill="#2f3a50" /><circle cx="29" cy="27" r="14" fill="#47567c" /><circle cx="29" cy="27" r="11" fill="#7488d8" /><circle cx="26" cy="24" r="4" fill="#e8ecff" /><circle cx="31" cy="24" r="4" fill="#3558e8" /><circle cx="27" cy="25" r="2" fill="#e03060" /><circle cx="50" cy="19" r="4" fill="#f2c81e" /></svg>Stream Camera</button>
                  <button class="gear"><svg width="72" height="72" viewBox="-36 -36 72 72"><g fill="#c7cac7"><circle r="26" />${range(8).map((i) => svg`<path transform="rotate(${i * 45})" d="M-9-22L-4-36H4L9-22z"/>`)}</g><circle r="10" fill="#fafafa" stroke="#545f82" stroke-width="6" /></svg>RCCS Control Pannel</button>
                </div>
              </div>
              ${this.flow()}
            </div>
          </div>
        </div>
        <footer><div>*MJ. Park (mijoy0909@ibs.re.kr), Control group, AET / BH.Choi  (123cbh@ibs.re.kr), Injector group, AFT   *Last modified : 2016/09/29</div><div>* Rare Isotope Science Project</div></footer>
        <div class="pad"></div>
      </section>
    </div>`;
  }
}
